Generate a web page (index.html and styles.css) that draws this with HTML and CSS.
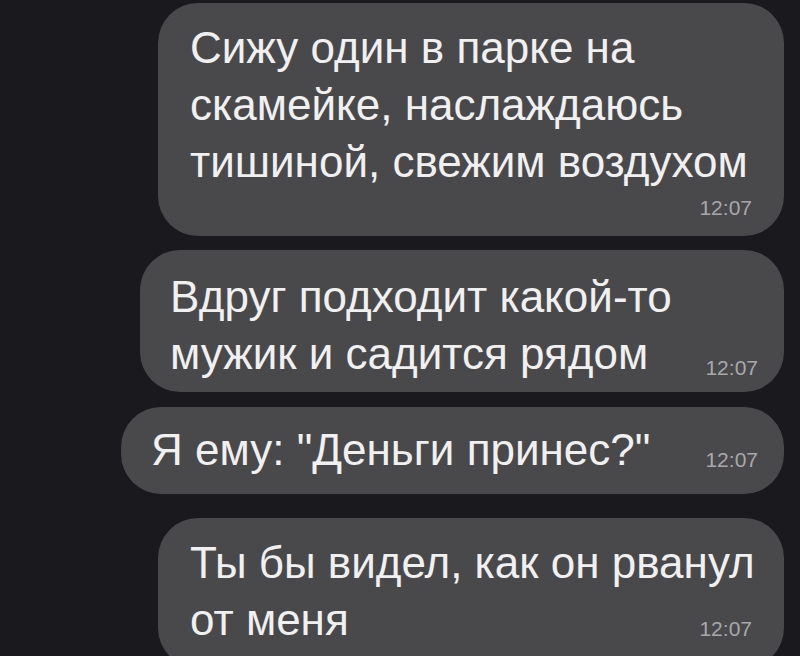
FILE: index.html
```html
<!DOCTYPE html>
<html lang="ru">
<head>
<meta charset="utf-8">
<link rel="stylesheet" href="styles.css">
</head>
<body>
<div class="chat">
  <div class="msg m1">
    <p class="text">Сижу один в парке на<br>скамейке, наслаждаюсь<br>тишиной, свежим воздухом</p>
    <div class="time-row"><span class="time">12:07</span></div>
  </div>
  <div class="msg m2">
    <p class="text">Вдруг подходит какой-то</p>
    <div class="last"><span class="text">мужик и садится рядом</span><span class="time">12:07</span></div>
  </div>
  <div class="msg m3">
    <div class="last"><span class="text">Я ему: "Деньги принес?"</span><span class="time">12:07</span></div>
  </div>
  <div class="msg m4">
    <p class="text">Ты бы видел, как он рванул</p>
    <div class="last"><span class="text">от меня</span><span class="time">12:07</span></div>
  </div>
</div>
</body>
</html>
```
FILE: styles.css
```css
html, body {
  margin: 0;
  padding: 0;
  background: #1a191d;
  height: 100%;
  overflow: hidden;
}
body {
  font-family: "Liberation Sans", Arial, sans-serif;
  color: #f0f0f0;
}
.chat {
  display: flex;
  flex-direction: column;
  align-items: flex-end;
  padding: 3px 16px 0 0;
}
.msg {
  background: #49494b;
  border-radius: 40px;
  box-sizing: border-box;
}
.text {
  margin: 0;
  font-size: 44px;
  line-height: 57px;
  white-space: nowrap;
}
.time {
  font-size: 21px;
  color: #a8a8aa;
  line-height: 20px;
}
.time-row {
  display: flex;
  justify-content: flex-end;
  margin-top: 8px;
}
.last {
  display: flex;
  align-items: flex-end;
  justify-content: space-between;
}
.m1 {
  width: 626px;
  height: 233px;
  padding: 16px 32px 0 32px;
}
.m2 {
  width: 644px;
  height: 142px;
  margin-top: 14px;
  padding: 18px 26px 0 30px;
}
.m2 .time {
  margin-bottom: 4px;
}
.m3 {
  width: 663px;
  height: 87px;
  margin-top: 15px;
  padding: 14px 26px 0 30px;
}
.m3 .time {
  margin-bottom: 8px;
}
.m4 {
  width: 626px;
  height: 150px;
  margin-top: 24px;
  padding: 16px 32px 0 32px;
}
.m4 .time {
  margin-bottom: 9px;
}
```
